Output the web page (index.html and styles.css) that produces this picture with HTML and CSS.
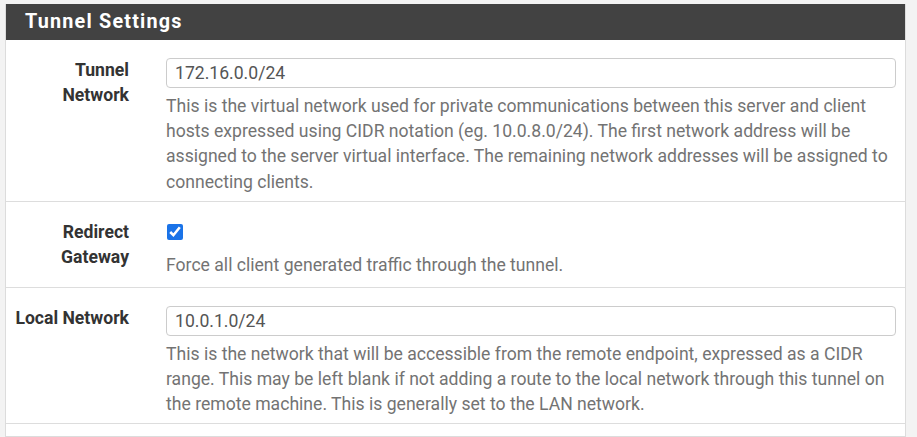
FILE: index.html
```html
<!DOCTYPE html>
<html>
<head>
<meta charset="utf-8">
<link rel="stylesheet" href="styles.css">
</head>
<body>
<div class="panel">
  <div class="panel-heading">Tunnel Settings</div>
  <div class="row">
    <div class="label">Tunnel<br>Network</div>
    <div class="field">
      <input class="input" type="text" value="172.16.0.0/24">
      <div class="help">This is the virtual network used for private communications between this server and client hosts expressed using CIDR notation (eg. 10.0.8.0/24). The first network address will be assigned to the server virtual interface. The remaining network addresses will be assigned to connecting clients.</div>
    </div>
  </div>
  <div class="row row-check">
    <div class="label">Redirect<br>Gateway</div>
    <div class="field">
      <div class="check-wrap"><input class="check" type="checkbox" checked></div>
      <div class="help help-check">Force all client generated traffic through the tunnel.</div>
    </div>
  </div>
  <div class="row row-last">
    <div class="label">Local Network</div>
    <div class="field">
      <input class="input" type="text" value="10.0.1.0/24">
      <div class="help">This is the network that will be accessible from the remote endpoint, expressed as a CIDR range. This may be left blank if not adding a route to the local network through this tunnel on the remote machine. This is generally set to the LAN network.</div>
    </div>
  </div>
  <div class="row-stub"></div>
</div>
</body>
</html>
```
FILE: styles.css
```css
html, body {
  margin: 0;
  padding: 0;
  background: #f3f3f3;
  font-family: Roboto, "Liberation Sans", sans-serif;
}
.panel {
  margin: 4px 11px 0 5px;
  border: 1px solid #dcdcdc;
  border-top: none;
  background: #ffffff;
  height: 433px;
  box-sizing: border-box;
}
.panel-heading {
  background: #424242;
  color: #ffffff;
  height: 36px;
  line-height: 36px;
  font-size: 19.8px;
  font-weight: 700;
  letter-spacing: 1.2px;
  padding-left: 19px;
}
.row {
  display: grid;
  grid-template-columns: 140px 1fr;
  border-bottom: 1px solid #dddddd;
  padding: 18px 0 6px 0;
}
.row-check {
  padding-bottom: 9px;
}
.row-last {
  padding-bottom: 5px;
}
.label {
  text-align: right;
  padding-right: 17px;
  font-weight: 700;
  font-size: 17.6px;
  line-height: 25.2px;
  color: #333333;
  padding-top: 0;
}
.field {
  padding-left: 20px;
  padding-right: 9px;
}
.input {
  display: block;
  box-sizing: border-box;
  width: 100%;
  height: 30px;
  margin: 0;
  border: 1px solid #cccccc;
  border-radius: 4px;
  padding: 0 8px;
  font-family: Roboto, "Liberation Sans", sans-serif;
  font-size: 17.6px;
  color: #555555;
  background: #ffffff;
  outline: none;
}
.help {
  margin-top: 6px;
  font-size: 17.6px;
  line-height: 25.2px;
  color: #737373;
}
.check-wrap {
  height: 16px;
  padding-top: 4px;
}
.check {
  display: block;
  margin: 0 0 0 1px;
  width: 16px;
  height: 16px;
  accent-color: #1a73e8;
}
.help-check {
  margin-top: 13px;
}
.row-stub {
  height: 20px;
}
```
